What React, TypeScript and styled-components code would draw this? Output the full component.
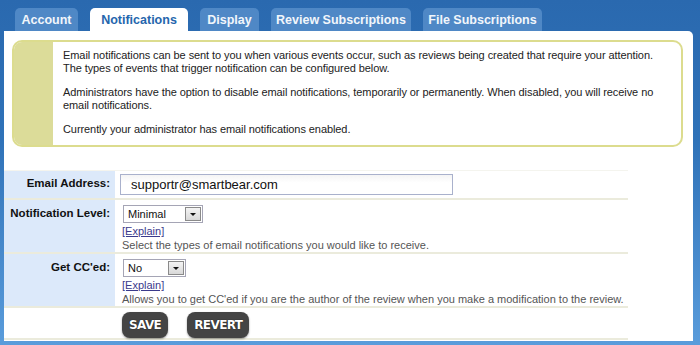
import React from "react";
import styled, {createGlobalStyle} from "styled-components";

const GlobalStyle = createGlobalStyle`
  html, body {
    margin: 0;
    padding: 0;
  }

  body {
    width: 700px;
    height: 345px;
    overflow: hidden;
    background: linear-gradient(to bottom, #2a69af 0%, #2f72b8 40%, #5a9cdb 100%);
    font-family: "Liberation Sans", Arial, sans-serif;
  }
`;

const Page = styled.div`
  display: flex;
  flex-direction: column;
  padding-top: 8px;
`;

const TabBar = styled.nav`
  display: flex;
  gap: 12px;
  padding-left: 15px;
  height: 23px;
`;

const Tab = styled.div<{ $active?: boolean; $width: number }>`
  display: flex;
  align-items: center;
  justify-content: center;
  width: ${p => p.$width}px;
  height: 23px;
  border-radius: 5px 5px 0 0;
  white-space: nowrap;
  font-size: 12.5px;
  font-weight: bold;
  color: ${p => (p.$active ? "#2566ad" : "#f2f6fb")};
  background: ${p => (p.$active ? "#ffffff" : "#4f88c6")};
`;

const Panel = styled.main`
  margin: 0 7px 0 4px;
  height: 310px;
  background: #ffffff;
  border-radius: 0 5px 0 0;
  display: flex;
  flex-direction: column;
`;

const InfoBox = styled.section`
  display: flex;
  margin: 9px 10px 0 8px;
  height: 103px;
  border: 2px solid #dcdc8e;
  border-radius: 10px;
  overflow: hidden;
`;

const InfoBand = styled.div`
  width: 39px;
  background: #dcdc99;
`;

const InfoText = styled.div`
  flex: 1;
  padding: 7px 10px 0 10px;
  font-size: 11px;
  line-height: 13px;
  letter-spacing: -0.08px;
  color: #222;

  p {
    margin: 0 0 11px 0;
  }
`;

const Form = styled.div`
  width: 624px;
  margin-top: 23px;
  display: flex;
  flex-direction: column;
  border-top: 1px solid #f4f4ee;
`;

const Row = styled.div<{ $height: number }>`
  display: grid;
  grid-template-columns: 111px 1fr;
  height: ${p => p.$height}px;
  border-bottom: 2px solid #ebebdc;
`;

const Label = styled.div<{ $top: number }>`
  background: #dce9fa;
  text-align: right;
  white-space: nowrap;
  padding: ${p => p.$top}px 5px 0 0;
  font-size: 11.5px;
  font-weight: bold;
  color: #111;
`;

const Value = styled.div`
  padding: 3px 0 0 5px;
  display: flex;
  flex-direction: column;
  align-items: flex-start;
  font-size: 11px;
  color: #555;
`;

const TextInput = styled.div`
  width: 321px;
  height: 19px;
  border: 1px solid #a9b1cc;
  padding-left: 10px;
  display: flex;
  align-items: center;
  font-size: 13px;
  color: #111;
  background: linear-gradient(to bottom, #f4f4f4, #ffffff 40%);
`;

const Select = styled.div<{ $width: number }>`
  margin: 2px 0 0 3px;
  width: ${p => p.$width}px;
  height: 18px;
  border: 1px solid #a5a5b5;
  display: flex;
  align-items: center;
  justify-content: space-between;
  padding: 0 1px 0 4px;
  box-sizing: border-box;
  font-size: 11px;
  color: #111;
  background: #fff;
`;

const SelectArrow = styled.span`
  width: 16px;
  height: 14px;
  border: 1px solid #8a8a8a;
  box-sizing: border-box;
  background: linear-gradient(to bottom, #f4f4f4, #d8d8d8);
  display: flex;
  align-items: center;
  justify-content: center;

  &::after {
    content: "";
    border-left: 3px solid transparent;
    border-right: 3px solid transparent;
    border-top: 3px solid #111;
  }
`;

const Explain = styled.a`
  margin: 2px 0 0 2px;
  color: #3a3a8c;
  text-decoration: underline;
  font-size: 11px;
  line-height: 13px;
`;

const Help = styled.div`
  margin-left: 2px;
  font-size: 11px;
  line-height: 14px;
  color: #555;
`;

const ButtonRow = styled.div`
  display: flex;
  gap: 19px;
  height: 32px;
  padding: 4px 0 0 118px;
  box-sizing: border-box;
  border-bottom: 2px solid #ebebdc;
`;

const Button = styled.button`
  height: 26px;
  padding: 0 7px;
  border: none;
  border-radius: 8px;
  background: #444444;
  box-shadow: 0 1px 2px rgba(0, 0, 0, 0.4);
  color: #ffffff;
  font-family: "DejaVu Sans", Verdana, sans-serif;
  font-size: 12px;
  font-weight: bold;
  letter-spacing: -0.6px;
  text-shadow: 0 0 1px #000;
`;

const tabs = [
    {name: "Account", width: 63},
    {name: "Notifications", width: 98, active: true},
    {name: "Display", width: 59},
    {name: "Review Subscriptions", width: 140},
    {name: "File Subscriptions", width: 119},
];

const App = () => {
    return (
        <Page>
            <GlobalStyle/>
            <TabBar>
                {tabs.map(t => (
                    <Tab key={t.name} $active={t.active} $width={t.width}>{t.name}</Tab>
                ))}
            </TabBar>
            <Panel>
                <InfoBox>
                    <InfoBand/>
                    <InfoText>
                        <p>Email notifications can be sent to you when various events occur, such as reviews being
                            created that require your attention.<br/>The types of events that trigger notification can
                            be configured below.</p>
                        <p>Administrators have the option to disable email notifications, temporarily or permanently.
                            When disabled, you will receive no email notifications.</p>
                        <p>Currently your administrator has email notifications enabled.</p>
                    </InfoText>
                </InfoBox>
                <Form>
                    <Row $height={27}>
                        <Label $top={6}>Email Address:</Label>
                        <Value>
                            <TextInput>supportr@smartbear.com</TextInput>
                        </Value>
                    </Row>
                    <Row $height={52}>
                        <Label $top={7}>Notification Level:</Label>
                        <Value>
                            <Select $width={80}>Minimal<SelectArrow/></Select>
                            <Explain href="#">[Explain]</Explain>
                            <Help>Select the types of email notifications you would like to receive.</Help>
                        </Value>
                    </Row>
                    <Row $height={52}>
                        <Label $top={7}>Get CC'ed:</Label>
                        <Value>
                            <Select $width={63}>No<SelectArrow/></Select>
                            <Explain href="#">[Explain]</Explain>
                            <Help>Allows you to get CC'ed if you are the author of the review when you make a
                                modification to the review.</Help>
                        </Value>
                    </Row>
                    <ButtonRow>
                        <Button>SAVE</Button>
                        <Button>REVERT</Button>
                    </ButtonRow>
                </Form>
            </Panel>
        </Page>
    );
};

export default App;
